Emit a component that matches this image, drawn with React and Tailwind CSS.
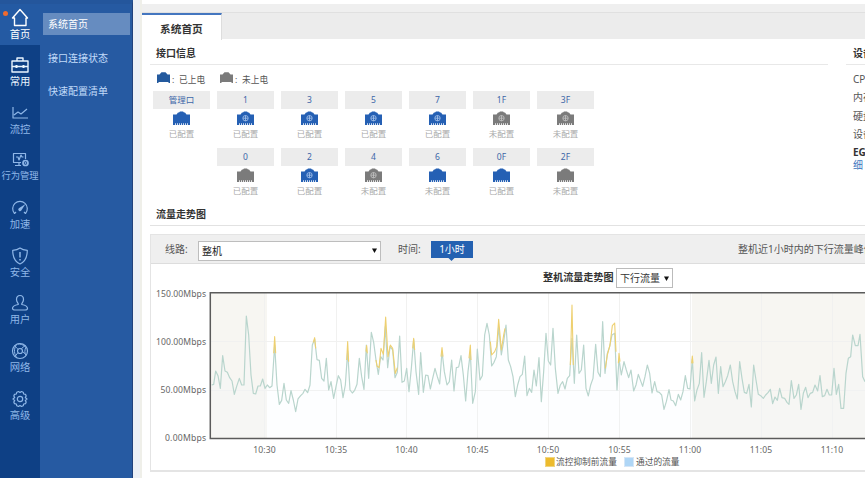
const navItems = [
  { label: "首页", icon: "home", active: true },
  { label: "常用", icon: "case", bright: true },
  { label: "流控", icon: "flow" },
  { label: "行为管理", icon: "behavior" },
  { label: "加速", icon: "speed" },
  { label: "安全", icon: "shield" },
  { label: "用户", icon: "user" },
  { label: "网络", icon: "network" },
  { label: "高级", icon: "gear" },
];

const subItems = ["系统首页", "接口连接状态", "快速配置清单"];

const ports = [
  [
    { name: "管理口", on: true, set: true },
    { name: "1", on: true, set: true, wan: true },
    { name: "3", on: true, set: true, wan: true },
    { name: "5", on: true, set: true, wan: true },
    { name: "7", on: true, set: true, wan: true },
    { name: "1F", wan: true },
    { name: "3F", wan: true },
  ],
  [
    null,
    { name: "0", set: true },
    { name: "2", on: true, set: true, wan: true },
    { name: "4", wan: true },
    { name: "6", on: true },
    { name: "0F", on: true, set: true },
    { name: "2F" },
  ],
];

// [x offset, samples], three plot units per pixel
const traffic = [
  [0, "20,300 26,298 32,258 39,272 46,310 53,212 60,258 67,262 74,278 81,288 88,328 95,304 103,280 110,300 117,300 124,93 131,150 138,270 145,325 152,327 159,303 166,303 173,282 180,310 187,300 194,308 201,303 209,180 216,300 223,358 230,346 237,295 244,345 251,355 258,317 265,345 272,380 279,342 287,332 294,325 300,313 308,323 315,300 322,180 329,163 336,224 343,226 350,280 357,288 364,220 371,315 378,290 386,340 393,305 400,272 407,285 414,338 421,300 428,198 435,315 442,324 449,316 456,298 463,220 470,275 477,313 484,180 491,280 499,142 506,172 513,225 520,268 527,215 534,225 541,125 548,248 555,185 563,195 570,278 577,262 584,153 591,292 598,288 605,250 612,320 619,250 626,164 633,260 641,328"],
  [645, "2,203 10,322 17,270 24,272 31,312 38,280 45,250 52,275 59,297 66,198 73,260 81,300 88,290 95,225 102,318 109,248 116,246 123,212 130,270 137,348 144,260 151,203 158,355 166,320 172,192 180,285 187,272 194,150 201,115 208,150 215,243 222,232 229,215 236,125 244,210 251,170 258,120 265,225 272,245 279,275 286,335 293,300 300,275 307,268 314,213 321,332 328,310 335,322 342,255 349,303 357,218 364,350 371,260 378,145 385,228 392,240 399,130 406,250 414,325 421,300 428,290 435,312 442,280 449,272 456,160 463,295 470,150 477,265 484,255 491,180 498,310 505,333 512,300 519,280 527,178 534,262 541,275 548,110 555,265 562,205 569,185 576,150 584,145 591,315 597,222 604,270 612,230 619,255 626,278 633,255 641,318 648,300 655,268"],
  [1305, "8,304 15,275 22,240 29,265 36,324 44,290 51,320 58,322 65,330 72,373 79,350 87,314 93,345 100,348 107,362 115,328 122,345 129,320 136,272 143,310 150,312 157,222 164,348 171,315 178,295 185,203 192,337 199,290 207,226 214,295 221,240 228,216 235,325 242,245 249,305 256,290 263,272 271,240 278,290 285,320 292,342 299,230 306,280 313,322 320,325 327,298 334,366 341,240 348,285 355,328 362,332 370,340 377,330 384,323 391,313 398,356 405,336 412,346 419,310 426,338 434,340 441,352 447,358 454,287 462,340 469,330 476,298 483,373 490,325 497,307 504,338 511,325 518,322 525,300 533,318 540,272 547,335 554,332 561,313 568,330 575,330 582,250 589,328 596,298 603,370 611,370 618,265 625,220 632,215 638,150 646,182 654,182 660,148 668,275 675,290"],
];

// stretches where the unthrottled traffic runs above the passed traffic
const peaks = [
  "206,205 209,155 212,205",
  "325,172 329,158 332,190",
  "425,225 428,170 431,230",
  "483,200 485,182 487,205",
  "513,225 516,243 522,248 528,190 535,208 542,96 549,215 556,180 563,190 571,265 577,248",
  "623,190 626,160 629,195",
  "708,215 711,188 714,215",
  "792,220 796,180 798,225",
  "856,170 860,210 869,200 875,185 881,103 889,195 896,150 900,130",
  "1096,240 1101,60 1105,240",
  "1201,250 1207,210 1215,180 1222,122 1229,114 1233,200",
  "1240,235 1242,205 1245,230",
  "1460,235 1462,213 1464,235",
];

const points = traffic
  .flatMap(([dx, s]) =>
    s.split(" ").map((p) => {
      const [x, y] = p.split(",").map(Number);
      return `${x + dx},${y}`;
    })
  )
  .join(" ");

const times = [
  [264.5, "10:30"], [336, "10:35"], [406.5, "10:40"], [477.5, "10:45"], [548, "10:50"],
  [619.5, "10:55"], [690, "11:00"], [761, "11:05"], [832, "11:10"],
];

function NavIcon({ name }) {
  return (
    <svg className="shrink-0" width="20" height="20" viewBox="0 0 20 20" fill="none" stroke="currentColor" strokeWidth="1.2" strokeLinejoin="round">
      {name === "home" && <path d="M2.500 10 10 1.500l7.500 8.500H16v7.500H4.500V10z" strokeWidth="1.4" />}
      {name === "case" && (
        <g strokeWidth="1.4">
          <path d="M2 6h16v11H2zM7 6V3h6v3M2 11.500h16" />
          <path d="M6.500 10v3M13.500 10v3" strokeWidth="2" />
        </g>
      )}
      {name === "flow" && <path d="M3 4v11h15M4 12l4-3 3 2 6-5" />}
      {name === "behavior" && (
        <g>
          <path d="M11 12.500H3.500v-9h12V9M5 15.500h6M9 13v2" />
          <path d="M6 7h2l1 3 2-5 1 2h1.500" />
          <circle cx="15.500" cy="13" r="2.500" strokeWidth="1.700" />
          <circle cx="15.500" cy="13" r=".3" />
        </g>
      )}
      {name === "speed" && (
        <g>
          <path d="M4.500 15.500A7.300 7.300 0 1 1 15.500 15.500M4.500 15.500 6 14M15.500 15.500 14 14" />
          <path d="m15.500 6-4.200 6.500a1.700 1.700 0 1 1-2.500-2.300z" fill="currentColor" stroke="none" />
        </g>
      )}
      {name === "shield" && (
        <g>
          <path d="M10 2c2 1.700 4.500 2.300 7.300 2.300 0 6-1.300 11-7.300 13.700C4 15.300 2.700 10.300 2.700 4.300 5.500 4.300 8 3.700 10 2z" />
          <path d="M10 6v5.500M10 13v1.500" strokeWidth="1.500" />
        </g>
      )}
      {name === "user" && (
        <path d="M10 2.500c2.300 0 3.500 1.700 3.500 4 0 2-1 3-1.700 4v1c2.500.5 5.700 1.500 5.700 3.700 0 1.800-1.500 1.800-2.500 1.800H5c-1 0-2.500 0-2.500-1.800 0-2.200 3.200-3.200 5.700-3.700v-1c-.7-1-1.700-2-1.700-4 0-2.300 1.200-4 3.500-4z" />
      )}
      {name === "network" && (
        <g>
          <circle cx="10" cy="10" r="7.500" />
          <circle cx="10" cy="10" r="2.500" />
          <path d="M5 4.500c1 2 2 3 3.500 3.800M15.500 5c-2 .5-3.500 1.700-4.300 3.300M12.500 10.500l4 3.500M8 11.500 5 15.500M6.500 3.500C3.500 8 4 13 7 17M16 6c-1.500 3-1.500 6 0 8.500M7.500 3c3-.2 5 .8 7.500 2" strokeWidth="1" />
        </g>
      )}
      {name === "gear" && (
        <g>
          <path d="m8.500 2.500 1.500 1 1.500-1 1.700.7.500 1.800 1.800.300.700 1.600-.900 1.600 1.700 1.500-1.700 1.500.9 1.600-.7 1.600-1.800.3-.5 1.800-1.700.7-1.500-1-1.500 1-1.700-.7-.5-1.800-1.800-.3-.7-1.600.9-1.600L3 10l1.700-1.500-.9-1.600.7-1.600 1.800-.3.5-1.800z" />
          <circle cx="10" cy="10" r="2.700" />
        </g>
      )}
    </svg>
  );
}

function PortIcon({ on, wan }) {
  return (
    <svg width="17" height="14" viewBox="0 0 17 14">
      <path d="M0 3.500h3.500L5 1.500h1L7 .5h3l1 1h1l1.500 2H17V14H0z" fill={on ? "#2560b4" : "#7b7b7b"} />
      <path d="M2 13.200h13" stroke="#fff" strokeWidth="1.700" strokeDasharray="1 1" opacity=".8" />
      {wan && (
        <g fill="none" stroke={on ? "#a9c5ec" : "#c4c4c4"} strokeWidth=".8">
          <circle cx="8.500" cy="7.200" r="2.700" />
          <path d="M6 7.200h5M8.500 4.500v5.400" />
        </g>
      )}
    </svg>
  );
}

function LegendIcon({ color }) {
  return (
    <svg width="13" height="11" viewBox="0 0 13 11">
      <path d="M0 2.500h2.500L4.500.3h4l2 2.200H13V11h-1.500v-1h-10v1H0z" fill={color} />
    </svg>
  );
}

function Caret() {
  return (
    <svg width="5" height="5" viewBox="0 0 5 5">
      <path d="M0 .5h5l-2.500 4.500z" fill="#111" />
    </svg>
  );
}

function Port({ port }) {
  if (!port) return <div className="w-[57px]" />;
  return (
    <div className="w-[57px] flex flex-col items-center">
      <div className="w-full h-[18px] bg-[#ececec] text-[#3c66a8] text-[8.5px] leading-[18px] text-center">{port.name}</div>
      <div className="mt-[2px] h-[14px]"><PortIcon on={port.on} wan={port.wan} /></div>
      <div className="mt-[3px] h-3 text-[8.5px] leading-3 text-[#aaa]">{port.set ? "已配置" : "未配置"}</div>
    </div>
  );
}

function Chart() {
  return (
    <svg className="block shrink-0" width="714" height="167" viewBox="151 289 714 167">
      <rect x="211" y="293" width="56" height="145" fill="#f7f6f2" />
      <rect x="692" y="293" width="174" height="145" fill="#f7f6f2" />
      <g stroke="#f1f1f0" strokeWidth="1">
        {times.map(([x]) => <path key={x} d={`M${Math.floor(x) + 0.5} 293V438`} />)}
        <path d="M211 341.500H866M211 390.500H866" />
      </g>
      <g transform="translate(205 285) scale(.33333)" fill="none" strokeWidth="3.600" strokeLinejoin="round">
        <polygon points={`20,455 ${points} 1980,455`} fill="#f4fbfd" fillOpacity=".15" stroke="none" />
        <polyline points={points} stroke="#b9d5cd" />
        {peaks.map((p) => <polyline key={p} points={p} stroke="#eed070" strokeWidth="3.300" />)}
      </g>
      <path d="M867 292.700H210.300V438.500H867" fill="none" stroke="#5b5b5b" strokeWidth="1.500" />
      <g fill="#666" fontSize="8.600">
        {times.map(([x, t]) => <text key={t} x={x} y="452.500" textAnchor="middle" textLength="22.500">{t}</text>)}
        {[["150.00Mbps", 296.5, 50], ["100.00Mbps", 345, 50], ["50.00Mbps", 393, 45.5], ["0.00Mbps", 441, 41]].map(([t, y, w]) => (
          <text key={t} x="206" y={y} textAnchor="end" textLength={w}>{t}</text>
        ))}
      </g>
    </svg>
  );
}

export default function App() {
  return (
    <div className="w-[865px] h-[478px] overflow-hidden flex bg-white text-[#555] text-[10px] leading-3 whitespace-nowrap font-['Noto_Sans','Noto_Sans_CJK_SC',sans-serif]">
      {/* Main menu */}
      <nav className="w-10 shrink-0 bg-[#0e4085] border-t-4 border-[#24569c]">
        {navItems.map((item) => (
          <div
            key={item.label}
            className={`relative flex flex-col items-center ${item.active ? "h-[41px] pt-1 bg-[#245aa3] text-white" : item.bright ? "h-[47.7px] pt-[10px] text-[#eaf5ff]" : "h-[47.7px] pt-[10px] text-[#8fb7e8]"}`}
          >
            {item.active && <i className="absolute left-[3px] top-[7px] size-[5px] rounded-full bg-[#ef6a2e]" />}
            <NavIcon name={item.icon} />
            <span className={item.label.length > 2 ? "text-[9.3px]" : "text-[10.3px]"}>{item.label}</span>
          </div>
        ))}
      </nav>

      {/* Sub menu */}
      <aside className="w-[93px] shrink-0 bg-[#265aa2] border-t-4 border-r border-t-[#24569c] border-r-[#20417d] pt-[9px] pl-[3px] text-[#c2dcfa]">
        {subItems.map((label, i) => (
          <div key={label} className={`w-[87px] h-[22px] pl-[5px] mb-[11.500px] leading-[22px] ${i === 0 ? "bg-[#668cc0] text-white" : ""}`}>{label}</div>
        ))}
      </aside>

      <div className="w-[9px] shrink-0 bg-[#ebeff6] border-r-2 border-[#efefe9]" />

      <main className="flex-1 min-w-0 flex flex-col">
        <div className="h-3 shrink-0 bg-[#efefef] border-t-4 border-white" />
        {/* Tabs */}
        <div className="h-[27px] shrink-0 bg-[#ececec] border-t border-[#e0e0e0]">
          <div className="w-[80px] h-[27px] bg-white border-t-2 border-r border-t-[#4476bf] border-r-[#ddd] pl-[18px] leading-[29px] text-[10.700px] font-bold text-[#333]">系统首页</div>
        </div>

        {/* Ports and device info */}
        <div className="flex h-[168px] shrink-0">
          <section className="ml-2 w-[678px] shrink-0">
            <h2 className="h-[26px] pl-[6px] leading-[28px] font-bold text-[#333] border-b border-[#e8e8e8]">接口信息</h2>
            <div className="mt-[7px] pl-[7px] h-[14px] flex text-[8.700px] leading-[16px]">
              <span className="flex w-[63px]"><LegendIcon color="#245a9e" /><span className="ml-[2px] w-[7px]">:</span>已上电</span>
              <span className="flex"><LegendIcon color="#7b7b7b" /><span className="ml-[2px] w-[7px]">:</span>未上电</span>
            </div>
            <div className="pl-[3px] mt-[5px] flex flex-col gap-[8px]">
              {ports.map((row, i) => (
                <div key={i} className="flex gap-[7px]">
                  {row.map((port, j) => <Port key={j} port={port} />)}
                </div>
              ))}
            </div>
          </section>
          <section className="ml-[18px] w-[200px] shrink-0">
            <h2 className="h-[26px] pl-[7px] leading-[28px] font-bold text-[#333] border-b border-[#e8e8e8]">设备</h2>
            <div className="pl-[7px] pt-[5px] leading-[18.300px]">
              <p>CPU</p>
              <p>内存</p>
              <p>硬盘</p>
              <p>设备</p>
              <p className="leading-[18px] font-bold text-[#333]">EG</p>
              <p className="leading-[8px] text-[#3b76bd]">细</p>
            </div>
          </section>
        </div>

        {/* Traffic trend */}
        <section className="ml-2 flex flex-col shrink-0">
          <h2 className="h-[19px] pl-[6px] leading-[15px] font-bold text-[#333] border-b border-[#e2e2e2]">流量走势图</h2>
          <div className="mt-2 h-[238px] border border-r-0 border-b-2 border-[#e4e4e4] overflow-hidden">
            <div className="h-[30px] -mt-px flex items-center bg-[#efefef] border-y border-t-[#cfcfcf] border-b-[#ddd]">
              <span className="w-[47px] shrink-0 pl-[14px]">线路:</span>
              <div className="w-[183px] shrink-0 h-5 mt-[3px] px-[3px] flex items-center justify-between bg-white border border-[#bdbdbd] text-[#222]">
                整机<Caret />
              </div>
              <span className="ml-[17px] w-[33px] shrink-0">时间:</span>
              <div className="relative w-[42px] shrink-0 h-[17px] bg-[#2461b1] text-white text-center leading-[16px]">
                1小时
                <i className="absolute left-[18px] top-[14px] size-[5px] rotate-45 bg-[#2461b1]" />
              </div>
              <span className="ml-[265px] shrink-0">整机近1小时内的下行流量峰值</span>
            </div>
            <div className="h-[25px] pl-[392px] flex items-center">
              <span className="w-[73px] text-[10.100px] font-bold text-[#333]">整机流量走势图</span>
              <div className="h-5 w-[57px] mt-[3px] px-[3px] flex items-center justify-between border border-[#bbb] text-[#333]">
                下行流量<Caret />
              </div>
            </div>
            <Chart />
            <div className="pl-[394px] flex items-center text-[8.700px]">
              <i className="size-[10px] border border-[#f0d580] bg-[#edbb2d]" /><span className="ml-px w-[68px]">流控抑制前流量</span>
              <i className="size-[10px] border border-[#d5e6f7] bg-[#afd6f6]" /><span className="ml-[2px]">通过的流量</span>
            </div>
          </div>
        </section>
      </main>
    </div>
  );
}
